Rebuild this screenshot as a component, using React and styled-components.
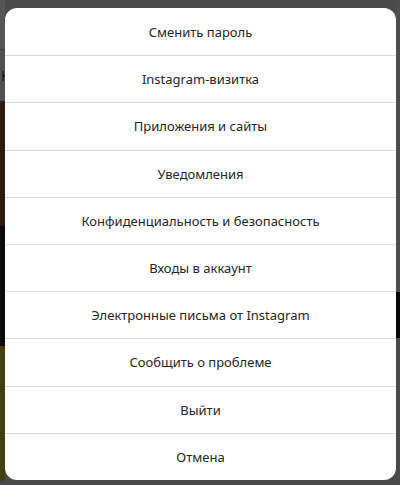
import React from 'react'
import styled, { createGlobalStyle } from 'styled-components'

const GlobalStyle = createGlobalStyle`
  html, body {
    margin: 0;
    padding: 0;
    background: #4a4a4a;
  }
  body {
    font-family: 'Noto Sans', 'Open Sans', sans-serif;
  }
`

const Backdrop = styled.div`
  width: 400px;
  height: 485px;
  overflow: hidden;
  background: #4a4a4a;
  display: grid;
  grid-template-columns: 5px 391px 4px;
  align-items: start;
`

const Strip = styled.div`
  display: flex;
  flex-direction: column;
  height: 480px;
`

const Block = styled.div`
  height: ${(p) => p.h}px;
  flex-shrink: 0;
  background: ${(p) => p.color};
  border-top: ${(p) => (p.line ? '1px solid #3a3a3a' : '0')};
  color: #111;
  font-size: 14px;
  line-height: 1;
  overflow: hidden;
  display: flex;
  align-items: center;
  padding-left: ${(p) => (p.pad ? 1 : 0)}px;
`

const Sheet = styled.div`
  margin-top: 8px;
  background: #fff;
  border-radius: 12px;
  overflow: hidden;
  display: flex;
  flex-direction: column;
`

const Item = styled.button`
  height: 47.2px;
  border: 0;
  border-top: ${(p) => (p.first ? '0' : '1px solid #dbdbdb')};
  background: transparent;
  font-family: inherit;
  font-size: 13px;
  color: #262626;
  display: flex;
  align-items: center;
  justify-content: center;
  padding: 0 16px;
  cursor: pointer;
`

const items = [
  'Сменить пароль',
  'Instagram-визитка',
  'Приложения и сайты',
  'Уведомления',
  'Конфиденциальность и безопасность',
  'Входы в аккаунт',
  'Электронные письма от Instagram',
  'Сообщить о проблеме',
  'Выйти',
  'Отмена',
]

export default function App() {
  return (
    <>
      <GlobalStyle />
      <Backdrop>
        <Strip>
          <Block h={49} color='#565656' />
          <Block h={51} color='#505050' line pad>
            Н
          </Block>
          <Block h={125} color='#2e1a14' />
          <Block h={120} color='#0b0b0b' />
          <Block h={135} color='#463d0f' />
        </Strip>
        <Sheet>
          {items.map((t, i) => (
            <Item key={t} first={i === 0}>
              {t}
            </Item>
          ))}
        </Sheet>
        <Strip>
          <Block h={292} color='#4d4d4d' />
          <Block h={46} color='#060606' />
        </Strip>
      </Backdrop>
    </>
  )
}
